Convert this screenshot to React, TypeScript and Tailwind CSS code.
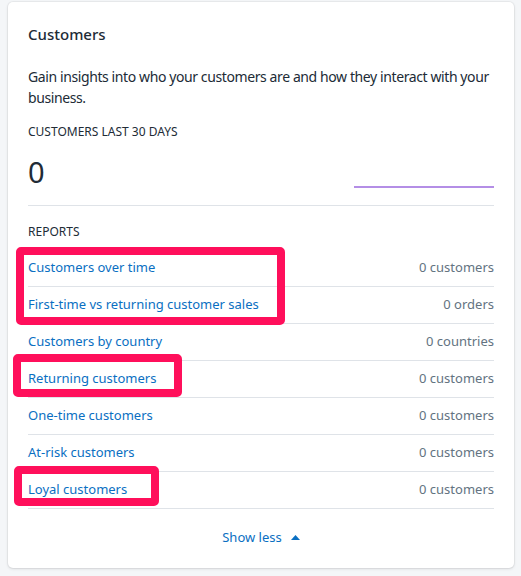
import React from 'react';

const reports = [
  { name: 'Customers over time', value: '0 customers' },
  { name: 'First-time vs returning customer sales', value: '0 orders' },
  { name: 'Customers by country', value: '0 countries' },
  { name: 'Returning customers', value: '0 customers' },
  { name: 'One-time customers', value: '0 customers' },
  { name: 'At-risk customers', value: '0 customers' },
  { name: 'Loyal customers', value: '0 customers' },
];

// highlight boxes drawn over the report list
const highlights = [
  'left-[16px] top-[247px] w-[269px] h-[78px]',
  'left-[13px] top-[354px] w-[169px] h-[43px]',
  'left-[14px] top-[466px] w-[145px] h-[40px]',
];

export default function App() {
  return (
    <div
      className="relative min-h-[576px] bg-[#f4f6f8] pt-[2px] pl-[8px] pr-[7px] text-[#212b36]"
      style={{ fontFamily: '"Noto Sans", "Open Sans", sans-serif' }}
    >
      <div className="rounded-[5px] bg-white px-5 pt-[20px] pb-[21px] shadow-[0_0_0_1px_rgba(63,63,68,0.05),0_1px_3px_0_rgba(63,63,68,0.15)]">
        <h2 className="text-[15px] font-medium leading-[24px]">Customers</h2>
        <p className="mt-[20px] text-[14px] leading-[21px] tracking-[-0.4px]">
          Gain insights into who your customers are and how they interact with your business.
        </p>
        <div className="mt-[14px] text-[12px] uppercase leading-[20px]">
          Customers last 30 days
        </div>
        <div className="mt-[12px] flex items-end justify-between">
          <span className="text-[29px] leading-[36px]">0</span>
          <div className="mb-[2px] h-[2px] w-[140px] bg-[#b48ee6]" />
        </div>
        <div className="mt-[15px] border-t border-[#dfe3e8]" />
        <div className="mt-[16px] text-[12px] uppercase leading-[20px]">Reports</div>
        <ul className="mt-[8px]">
          {reports.map((r) => (
            <li
              key={r.name}
              className="flex h-[37px] items-center justify-between border-b border-[#dfe3e8] pb-[1px] text-[13px]"
            >
              <a href="#" className="text-[#0a6fc2]">
                {r.name}
              </a>
              <span className="text-[#637381]">{r.value}</span>
            </li>
          ))}
        </ul>
        <div className="mt-[18px] flex items-center justify-center gap-[9px] text-[13px] leading-[20px] text-[#0a6fc2]">
          <span>Show less</span>
          <svg width="9" height="5" viewBox="0 0 9 5" className="fill-[#0a6fc2]">
            <path d="M0 5 L4.5 0 L9 5 Z" />
          </svg>
        </div>
      </div>
      {highlights.map((h) => (
        <div key={h} className={`absolute ${h} rounded-[5px] border-[8px] border-[#ff0f5b]`} />
      ))}
    </div>
  );
}
